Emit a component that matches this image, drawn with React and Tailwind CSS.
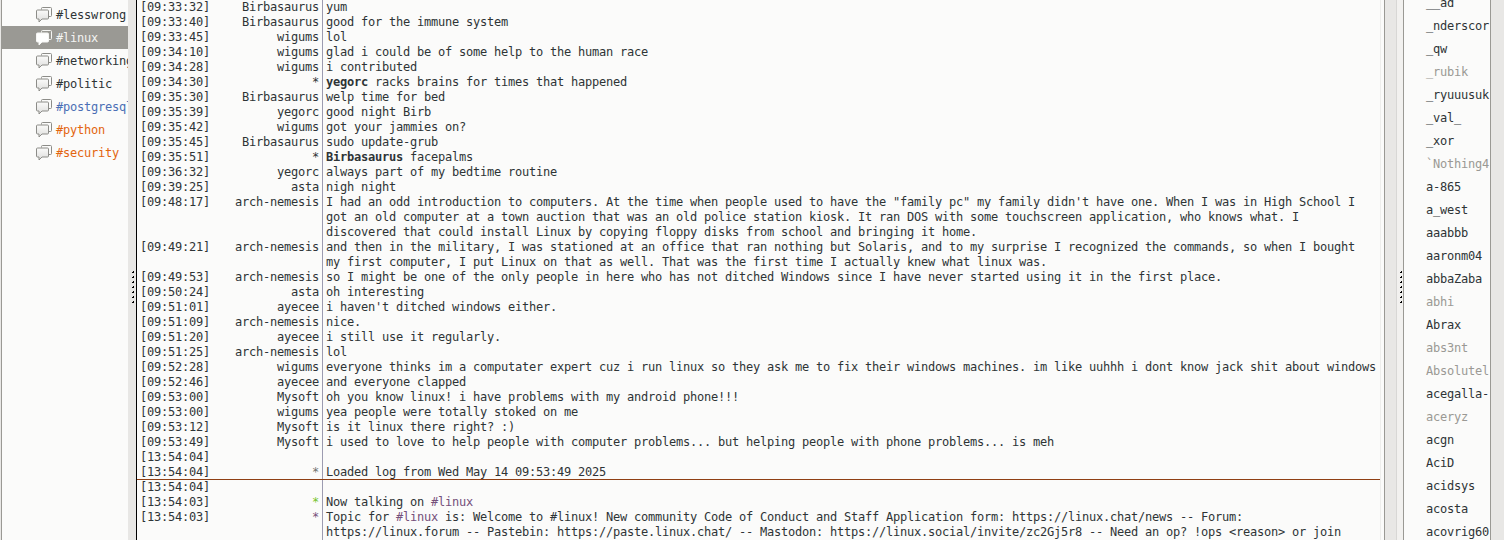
import React from "react";

const channels = [
  { name: "#lesswrong", color: "text-[#2e3436]" },
  { name: "#linux", color: "text-[#f4f4f2]", active: true },
  { name: "#networking", color: "text-[#2e3436]" },
  { name: "#politic", color: "text-[#2e3436]" },
  { name: "#postgresql", color: "text-[#4a6fb5]" },
  { name: "#python", color: "text-[#e3650f]" },
  { name: "#security", color: "text-[#e3650f]" },
];

const log = [
  ["09:33:32", "Birbasaurus", "yum"],
  ["09:33:40", "Birbasaurus", "good for the immune system"],
  ["09:33:45", "wigums", "lol"],
  ["09:34:10", "wigums", "glad i could be of some help to the human race"],
  ["09:34:28", "wigums", "i contributed"],
  ["09:34:30", "*", <><b>yegorc</b> racks brains for times that happened</>],
  ["09:35:30", "Birbasaurus", "welp time for bed"],
  ["09:35:39", "yegorc", "good night Birb"],
  ["09:35:42", "wigums", "got your jammies on?"],
  ["09:35:45", "Birbasaurus", "sudo update-grub"],
  ["09:35:51", "*", <><b>Birbasaurus</b> facepalms</>],
  ["09:36:32", "yegorc", "always part of my bedtime routine"],
  ["09:39:25", "asta", "nigh night"],
  ["09:48:17", "arch-nemesis", <>I had an odd introduction to computers. At the time when people used to have the "family pc" my family didn't have one. When I was in High School I got an old computer at a town auction that was an old police station kiosk. It ran DOS with some touchscreen application, who knows what. I<br />discovered that could install Linux by copying floppy disks from school and bringing it home.</>],
  ["09:49:21", "arch-nemesis", <>and then in the military, I was stationed at an office that ran nothing but Solaris, and to my surprise I recognized the commands, so when I bought<br />my first computer, I put Linux on that as well. That was the first time I actually knew what linux was.</>],
  ["09:49:53", "arch-nemesis", "so I might be one of the only people in here who has not ditched Windows since I have never started using it in the first place."],
  ["09:50:24", "asta", "oh interesting"],
  ["09:51:01", "ayecee", "i haven't ditched windows either."],
  ["09:51:09", "arch-nemesis", "nice."],
  ["09:51:20", "ayecee", "i still use it regularly."],
  ["09:51:25", "arch-nemesis", "lol"],
  ["09:52:28", "wigums", "everyone thinks im a computater expert cuz i run linux so they ask me to fix their windows machines. im like uuhhh i dont know jack shit about windows"],
  ["09:52:46", "ayecee", "and everyone clapped"],
  ["09:53:00", "Mysoft", "oh you know linux! i have problems with my android phone!!!"],
  ["09:53:00", "wigums", "yea people were totally stoked on me"],
  ["09:53:12", "Mysoft", "is it linux there right? :)"],
  ["09:53:49", "Mysoft", "i used to love to help people with computer problems... but helping people with phone problems... is meh"],
  ["13:54:04", "", ""],
  ["13:54:04", "*", "Loaded log from Wed May 14 09:53:49 2025", "text-[#6f7270]"],
];

const live = [
  ["13:54:04", "", ""],
  ["13:54:03", "*", <>Now talking on <span className="text-[#75507b]">#linux</span></>, "text-[#73c42d]"],
  ["13:54:03", "*", <>Topic for <span className="text-[#75507b]">#linux</span> is: Welcome to #linux! New community Code of Conduct and Staff Application form: https://linux.chat/news -- Forum: https://linux.forum -- Pastebin: https://paste.linux.chat/ -- Mastodon: https://linux.social/invite/zc2Gj5r8 -- Need an op? !ops &lt;reason&gt; or join</>, "text-[#75507b]"],
];

const users = [
  ["__ad"],
  ["_nderscor"],
  ["_qw"],
  ["_rubik", true],
  ["_ryuuusuk"],
  ["_val_"],
  ["_xor"],
  ["`Nothing4", true],
  ["a-865"],
  ["a_west"],
  ["aaabbb"],
  ["aaronm04"],
  ["abbaZaba"],
  ["abhi", true],
  ["Abrax"],
  ["abs3nt", true],
  ["Absolutel", true],
  ["acegalla-"],
  ["aceryz", true],
  ["acgn"],
  ["AciD"],
  ["acidsys"],
  ["acosta"],
  ["acovrig60"],
];

function ChatIcon({ active, id }) {
  const stroke = active ? "#f6f6f4" : "#8c8c88";
  return (
    <svg width="16" height="16" viewBox="0 0 16 16" className="shrink-0">
      <defs>
        <linearGradient id={id} x1="0" y1="0" x2="0" y2="1">
          <stop offset="0" stopColor={active ? "#ffffff" : "#fbfbfa"} />
          <stop offset="1" stopColor={active ? "#ffffff" : "#dddddb"} />
        </linearGradient>
      </defs>
      <path d="M5.5 2.5V1.5a1 1 0 0 1 1-1h8a1 1 0 0 1 1 1v7a1 1 0 0 1-1 1h-1.5" fill="none" stroke={stroke} />
      <path d="M1.5 3h10a1 1 0 0 1 1 1v7a1 1 0 0 1-1 1H6l-3 3v-3H1.5a1 1 0 0 1-1-1V4a1 1 0 0 1 1-1z" fill={`url(#${id})`} stroke={stroke} />
    </svg>
  );
}

function Row({ row }) {
  const [time, nick, text, nickColor] = row;
  return (
    <div className="grid grid-cols-[72px_113px_1fr]">
      <div className="pl-[3px]">[{time}]</div>
      <div className={`text-right pr-[3px] ${nickColor || ""}`}>{nick}</div>
      <div className="pl-[4px] min-h-[15px]">{text}</div>
    </div>
  );
}

function Grip() {
  return (
    <svg width="2" height="32" viewBox="0 0 2 32" className="mt-[271px] ml-px">
      {[0, 5, 10, 15, 20, 25, 30].map((y) => (
        <path key={y} d={`M1 ${y}h1v2H0v-1h1z`} fill="#000" />
      ))}
    </svg>
  );
}

export default function App() {
  return (
    <div className="flex h-[540px] w-[1504px] overflow-hidden bg-[#e8e7e5] text-[12px] leading-[15px] tracking-[-0.224px] text-[#2e3436] font-['DejaVu_Sans_Mono','Liberation_Mono',monospace]">
      {/* channel tree */}
      <div className="w-[127px] shrink-0 border-l border-[#9a9994] bg-[#fbfbfa] ml-px pt-[3px] overflow-hidden">
        {channels.map((c, i) => (
          <div
            key={c.name}
            className={`h-[23px] flex items-center gap-[4px] pl-[34px] overflow-hidden whitespace-nowrap ${c.active ? "bg-[#9a9994]" : ""}`}
          >
            <ChatIcon active={c.active} id={`bubble-${i}`} />
            <span className={`pt-[2px] ${c.color}`}>{c.name}</span>
          </div>
        ))}
      </div>

      <div className="w-[8px] shrink-0 flex justify-center">
        <Grip />
      </div>

      {/* chat log */}
      <div className="w-[1244px] shrink-0 border-l border-black bg-[#fbfbfa] relative overflow-hidden">
        <div className="absolute left-[185px] top-0 bottom-0 w-px bg-[#9c9bb0]" />
        <div className="w-[1243px]">
          {log.map((r, i) => <Row key={i} row={r} />)}
          <div className="relative h-px -mt-px bg-[#8f3f14]" />
          {live.map((r, i) => <Row key={i} row={r} />)}
        </div>
      </div>

      <div className="w-[4px] shrink-0 bg-[#fbfbfa] border-l border-[#eeeeec]" />

      {/* log scrollbar */}
      <div className="w-[12px] shrink-0 border-l border-[#9a9994] bg-[#e8e7e5]" />

      <div className="w-[7px] shrink-0 bg-[#f2f1ef] border-l border-[#d8d7d5] flex justify-center">
        <Grip />
      </div>

      {/* user list */}
      <div className="w-[88px] shrink-0 border-x border-[#9a9994] bg-[#fbfbfa] overflow-hidden pl-[22px] whitespace-nowrap">
        <div className="-mt-[8px]">
          {users.map(([name, away]) => (
            <div key={name} className={`h-[23px] flex items-center ${away ? "text-[#9a9994]" : ""}`}>
              {name}
            </div>
          ))}
        </div>
      </div>

      <div className="flex-1 bg-[#e8e7e5]" />
    </div>
  );
}
